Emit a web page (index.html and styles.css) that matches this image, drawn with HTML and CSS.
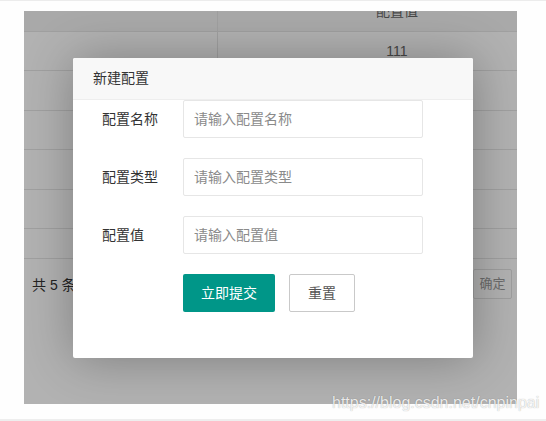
FILE: index.html
```html
<!DOCTYPE html>
<html lang="zh-CN">
<head>
<meta charset="utf-8">
<title>新建配置</title>
<link rel="stylesheet" href="styles.css">
</head>
<body>
<div class="topline"></div>
<div class="frame">
  <div class="table">
    <div class="thead">
      <div class="cell c1"></div>
      <div class="cell c2">配置值</div>
    </div>
    <div class="tbody">
      <div class="row"><div class="cell c1"></div><div class="cell c2">111</div></div>
      <div class="row"><div class="cell c1"></div><div class="cell c2">222</div></div>
      <div class="row"><div class="cell c1"></div><div class="cell c2">333</div></div>
      <div class="row"><div class="cell c1"></div><div class="cell c2">444</div></div>
      <div class="row"><div class="cell c1"></div><div class="cell c2">555</div></div>
    </div>
    <div class="pager">
      <span class="count">共 5 条</span>
      <span class="ok">确定</span>
    </div>
  </div>
  <div class="shade"></div>
  <div class="modal">
    <div class="modal-title">新建配置</div>
    <form class="form">
      <div class="form-item">
        <label class="label">配置名称</label>
        <input class="input" type="text" placeholder="请输入配置名称">
      </div>
      <div class="form-item">
        <label class="label">配置类型</label>
        <input class="input" type="text" placeholder="请输入配置类型">
      </div>
      <div class="form-item">
        <label class="label">配置值</label>
        <input class="input" type="text" placeholder="请输入配置值">
      </div>
      <div class="buttons">
        <button type="button" class="btn btn-main">立即提交</button>
        <button type="button" class="btn btn-plain">重置</button>
      </div>
    </form>
  </div>
</div>
<div class="bottomgap"></div>
<div class="bottomline"></div>
<div class="watermark">https://blog.csdn.net/cnpinpai</div>
</body>
</html>
```
FILE: styles.css
```css
html, body {
  margin: 0;
  padding: 0;
}
body {
  position: relative;
  width: 546px;
  height: 421px;
  overflow: hidden;
  background: #fefefe;
  font-family: "Liberation Sans", "Noto Sans CJK SC", sans-serif;
  font-size: 14px;
  color: #333;
}
.topline {
  height: 1px;
  background: #ececec;
  margin-bottom: 10px;
}
.frame {
  position: relative;
  margin-left: 24px;
  width: 493px;
  height: 393px;
  overflow: hidden;
  background: #fff;
}
.table {
  margin-top: -20px;
  width: 560px;
  color: #666;
}
.thead, .row {
  display: flex;
  border-bottom: 1px solid #e6e6e6;
}
.thead {
  height: 40px;
  background: #f2f2f2;
  color: #666;
}
.tbody {
  height: 226px;
}
.row {
  height: 38.4px;
}
.cell {
  display: flex;
  align-items: center;
  justify-content: center;
  line-height: 20px;
}
.c1 {
  width: 193px;
  border-right: 1px solid #e6e6e6;
}
.c2 {
  width: 358px;
}
.pager {
  display: grid;
  grid-template-columns: 441px 39px;
  align-items: start;
  border-top: 1px solid #e6e6e6;
  height: 60px;
  padding: 10px 0 0 8px;
  box-sizing: border-box;
  color: #333;
}
.count {
  line-height: 30px;
  font-size: 14px;
  margin-top: 1px;
}
.ok {
  width: 39px;
  height: 30px;
  box-sizing: border-box;
  border: 1px solid #e2e2e2;
  border-radius: 2px;
  line-height: 28px;
  text-align: center;
  font-size: 13px;
  color: #9a9a9a;
  background: #fff;
}
.shade {
  position: absolute;
  inset: 0;
  background: rgba(0, 0, 0, 0.3);
}
.modal {
  position: absolute;
  left: 49px;
  top: 47px;
  width: 400px;
  height: 300px;
  background: #fff;
  border-radius: 2px;
  box-shadow: 1px 1px 50px rgba(0, 0, 0, 0.3);
}
.modal-title {
  height: 41px;
  line-height: 41px;
  padding-left: 20px;
  background: #f8f8f8;
  border-bottom: 1px solid #eee;
  border-radius: 2px 2px 0 0;
  color: #333;
  font-size: 14px;
}
.form {
  margin: 0;
}
.form-item {
  display: flex;
  align-items: center;
  margin-bottom: 20px;
}
.label {
  width: 110px;
  box-sizing: border-box;
  padding-left: 29px;
  line-height: 20px;
  color: #333;
}
.input {
  width: 240px;
  height: 38px;
  box-sizing: border-box;
  margin: 0;
  padding: 0 10px;
  border: 1px solid #e6e6e6;
  border-radius: 2px;
  font-family: "Liberation Sans", "Noto Sans CJK SC", sans-serif;
  font-size: 14px;
  color: #333;
  background: #fff;
  outline: none;
}
.input::placeholder {
  color: #8a8a8a;
}
.buttons {
  display: flex;
  gap: 14px;
  padding-left: 110px;
}
.btn {
  height: 38px;
  box-sizing: border-box;
  padding: 0 18px;
  border-radius: 2px;
  font-family: "Liberation Sans", "Noto Sans CJK SC", sans-serif;
  font-size: 14px;
  line-height: 36px;
  cursor: pointer;
}
.btn-main {
  width: 92px;
  padding: 0;
  border: none;
  background: #009688;
  color: #fff;
}
.btn-plain {
  width: 66px;
  padding: 0;
  border: 1px solid #c9c9c9;
  background: #fff;
  color: #555;
}
.bottomgap {
  height: 15px;
}
.bottomline {
  height: 2px;
  background: #eeeeee;
}
.watermark {
  position: absolute;
  left: 332px;
  top: 395px;
  font-family: "Liberation Sans", Arial, sans-serif;
  font-size: 16px;
  line-height: 16px;
  color: rgba(255, 255, 255, 0.85);
  text-shadow: 0 0 1px rgba(0, 0, 0, 0.35);
  white-space: nowrap;
}
```
